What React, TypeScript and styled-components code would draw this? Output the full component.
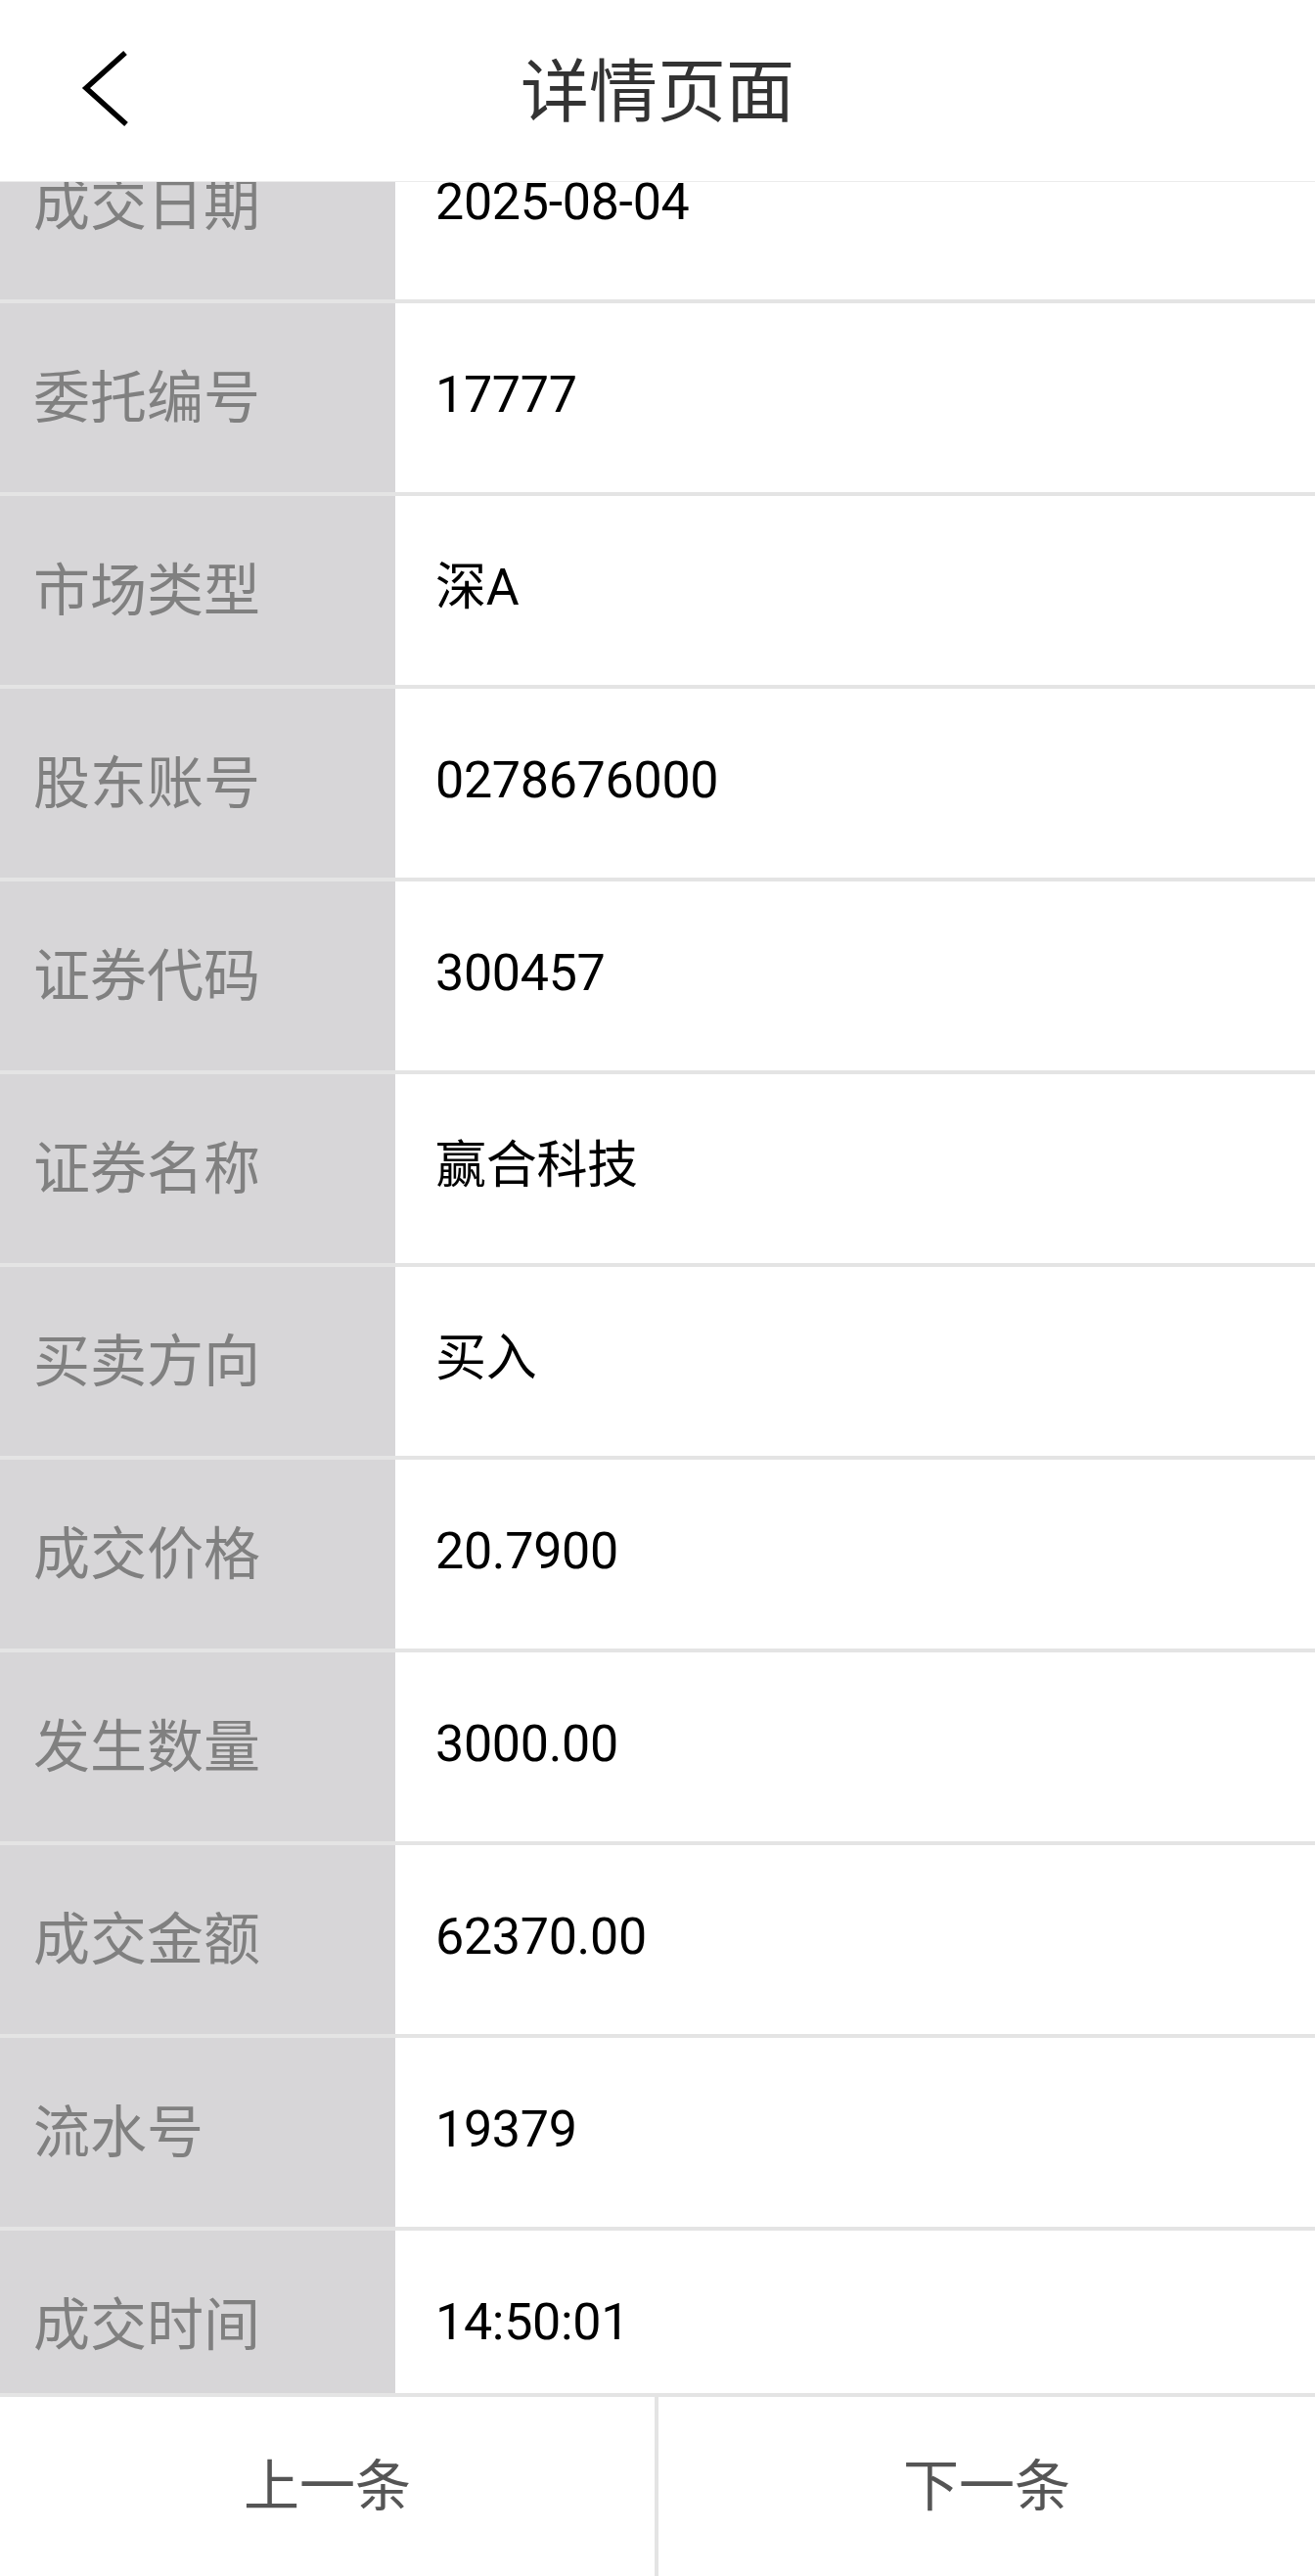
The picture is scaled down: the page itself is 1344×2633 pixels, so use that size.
import React, { useLayoutEffect, useRef } from "react";
import styled, { createGlobalStyle } from "styled-components";

const GlobalStyle = createGlobalStyle`
  html, body {
    margin: 0;
    padding: 0;
    height: 100%;
    background: #ffffff;
  }
  #root {
    height: 100%;
  }
  * {
    box-sizing: border-box;
  }
`;

const Page = styled.div`
  height: 100vh;
  display: flex;
  flex-direction: column;
  background: #ffffff;
  font-family: "Noto Sans CJK SC", "Noto Sans", sans-serif;
  overflow: hidden;
`;

const Header = styled.header`
  flex: 0 0 186px;
  position: relative;
  display: flex;
  align-items: center;
  justify-content: center;
  padding-bottom: 8px;
  background: #ffffff;
  border-bottom: 1px solid #ececec;
`;

const BackButton = styled.button`
  position: absolute;
  left: 78px;
  top: 44px;
  width: 60px;
  height: 94px;
  padding: 0;
  border: none;
  background: transparent;
  display: flex;
  align-items: center;
  justify-content: center;
  cursor: pointer;
`;

const Title = styled.h1`
  margin: 0;
  font-size: 70px;
  font-weight: 400;
  color: #333333;
  line-height: 1;
  letter-spacing: 0;
`;

const ScrollArea = styled.div`
  flex: 1 1 auto;
  overflow-y: auto;
  scrollbar-width: none;
  &::-webkit-scrollbar {
    display: none;
  }
`;

const Row = styled.div`
  display: grid;
  grid-template-columns: 404px 1fr;
  height: 197px;
  border-bottom: 4px solid #e4e4e4;
`;

const Label = styled.div`
  display: flex;
  align-items: center;
  padding: 0 0 10px 34px;
  background: #d7d6d8;
  color: #808080;
  font-size: 58px;
  line-height: 1;
`;

const Value = styled.div`
  display: flex;
  align-items: center;
  padding: 0 0 5px 41px;
  background: #ffffff;
  color: #000000;
  font-family: Roboto, "Noto Sans CJK SC", sans-serif;
  font-size: 52px;
  letter-spacing: -0.3px;
  line-height: 1;
`;

const BottomBar = styled.nav`
  flex: 0 0 187px;
  display: grid;
  grid-template-columns: 669px 4px 1fr;
  border-top: 4px solid #e4e4e4;
  background: #ffffff;
`;

const NavButton = styled.button`
  border: none;
  background: #ffffff;
  padding: 0 0 12px 0;
  font-family: "Noto Sans CJK SC", "Noto Sans", sans-serif;
  font-size: 57px;
  color: #555555;
  cursor: pointer;
`;

const Divider = styled.div`
  background: #e4e4e4;
`;

const rows: [string, string][] = [
  ["成交日期", "2025-08-04"],
  ["委托编号", "17777"],
  ["市场类型", "深A"],
  ["股东账号", "0278676000"],
  ["证券代码", "300457"],
  ["证券名称", "赢合科技"],
  ["买卖方向", "买入"],
  ["成交价格", "20.7900"],
  ["发生数量", "3000.00"],
  ["成交金额", "62370.00"],
  ["流水号", "19379"],
  ["成交时间", "14:50:01"],
];

export default function App() {
  const scrollRef = useRef<HTMLDivElement>(null);

  useLayoutEffect(() => {
    if (scrollRef.current) {
      scrollRef.current.scrollTop = 73;
    }
  }, []);

  return (
    <>
      <GlobalStyle />
      <Page>
        <Header>
          <BackButton aria-label="返回">
            <svg width="60" height="94" viewBox="0 0 60 94" fill="none">
              <polyline
                points="50,10 10,46 51,83"
                stroke="#000000"
                strokeWidth="5.5"
                strokeLinecap="butt"
                strokeLinejoin="miter"
                fill="none"
              />
            </svg>
          </BackButton>
          <Title>详情页面</Title>
        </Header>
        <ScrollArea ref={scrollRef}>
          {rows.map(([label, value]) => (
            <Row key={label}>
              <Label>{label}</Label>
              <Value>{value}</Value>
            </Row>
          ))}
        </ScrollArea>
        <BottomBar>
          <NavButton>上一条</NavButton>
          <Divider />
          <NavButton>下一条</NavButton>
        </BottomBar>
      </Page>
    </>
  );
}
